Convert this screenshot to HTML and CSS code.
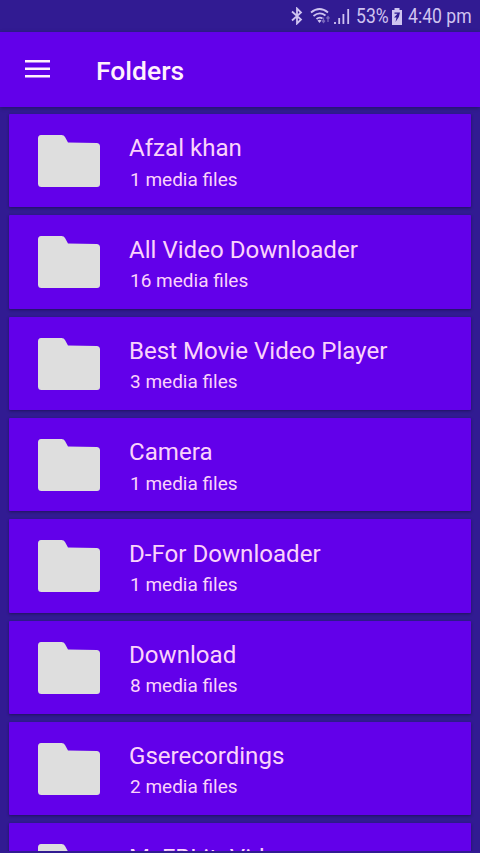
FILE: index.html
```html
<!DOCTYPE html>
<html lang="en">
<head>
<meta charset="utf-8">
<title>Folders</title>
<link rel="stylesheet" href="styles.css">
</head>
<body>
<svg class="defs" aria-hidden="true"><symbol id="folder" viewBox="0 0 62 52"><path d="M3 0H23.500Q26 0 27 2L30 7.500L58.500 8Q62 8 62 11.500V49Q62 52 59 52H3.500Q0 52 0 48.500V3.500Q0 0 3 0Z"/></symbol></svg>
<div class="status">
<svg class="bluetooth" viewBox="0 0 12 18"><path d="M1 4.500L10 12.500L6 16.500V1.500L10 5.500L1 13.500"/></svg>
<svg class="wifi" viewBox="0 0 22 18"><path d="M1 5.500Q9.500-1.500 18 5.500M3.500 9Q9.500 4 15.500 8.500M6.500 12Q9.500 9.500 12.500 11.500"/><path class="solid" d="M7.500 13.500Q9.500 12 11.500 13.500L9.500 16Z"/><path class="dim" d="M13.500 10.500V15M12 13.500L13.500 15.500L15 13.500M18 15V10M16.500 11.500L18 9.500L19.500 11.500"/></svg>
<svg class="signal" viewBox="0 0 16 16"><path d="M1 16V14M5.200 16V10M9.400 16V6M14.200 16V1"/></svg>
<span class="percent">53%</span>
<svg class="battery" viewBox="0 0 12 17"><path class="solid" d="M3.500 0H8.500V2H11V17H1V2H3.500Z"/><path class="bolt" d="M3.500 4.500H9L7.800 9L4.500 14L5.500 9.500H3L6.500 5.800H3.500Z"/></svg>
<span class="time">4:40 pm</span>
</div>
<header class="bar">
<svg class="menu" viewBox="0 0 26 20"><path d="M0 2.300H25M0 9.800H25M0 17.300H25"/></svg>
<h1>Folders</h1>
</header>
<main class="list">
<article class="card"><svg class="folder"><use href="#folder"/></svg><div class="info"><h2>Afzal khan</h2><p>1 media files</p></div></article>
<article class="card"><svg class="folder"><use href="#folder"/></svg><div class="info"><h2>All Video Downloader</h2><p>16 media files</p></div></article>
<article class="card"><svg class="folder"><use href="#folder"/></svg><div class="info"><h2>Best Movie Video Player</h2><p>3 media files</p></div></article>
<article class="card"><svg class="folder"><use href="#folder"/></svg><div class="info"><h2>Camera</h2><p>1 media files</p></div></article>
<article class="card"><svg class="folder"><use href="#folder"/></svg><div class="info"><h2>D-For Downloader</h2><p>1 media files</p></div></article>
<article class="card"><svg class="folder"><use href="#folder"/></svg><div class="info"><h2>Download</h2><p>8 media files</p></div></article>
<article class="card"><svg class="folder"><use href="#folder"/></svg><div class="info"><h2>Gserecordings</h2><p>2 media files</p></div></article>
<article class="card"><svg class="folder"><use href="#folder"/></svg><div class="info"><h2>MxFBLiteVideo</h2></div></article>
</main>
</body>
</html>
```
FILE: styles.css
```css
* { box-sizing: border-box; }
body {
  margin: 0;
  height: 853px;
  overflow: hidden;
  display: flex;
  flex-direction: column;
  background: #311b92;
  color: #fbd3fb;
  font-family: Roboto, sans-serif;
}
h1, h2, p { margin: 0; font-weight: 400; white-space: nowrap; }
.defs { display: none; }
.status {
  height: 32px;
  flex: none;
  display: flex;
  align-items: center;
  justify-content: flex-end;
  padding-right: 8px;
  color: #cfc4f0;
  font-size: 20px;
}
.status svg { flex: none; fill: none; stroke: currentColor; stroke-width: 1.8; }
.status .solid { fill: currentColor; stroke: none; }
.status .dim { opacity: .45; stroke-width: 1.3; }
.status .bolt { fill: #311b92; stroke: none; }
.bluetooth { width: 12px; height: 18px; margin-right: 7px; }
.wifi { width: 22px; height: 18px; margin-right: 2px; }
.signal { width: 16px; height: 16px; margin-right: 6px; }
.percent { width: 32px; margin-right: 3px; }
.battery { width: 12px; height: 17px; margin-right: 5px; }
.time { width: 64px; }
.percent, .time { display: block; white-space: nowrap; transform: scaleX(.88); transform-origin: left; }
.bar {
  height: 75px;
  flex: none;
  display: flex;
  align-items: center;
  padding: 2px 0 0 25px;
  background: #6200ea;
  box-shadow: 0 1px 4px rgba(0, 0, 0, .3);
  color: #fff0fc;
}
.menu { width: 26px; height: 20px; margin: 0 45px 4px 0; fill: none; stroke: currentColor; stroke-width: 2.4; }
.bar h1 { font-size: 26.500px; font-weight: 500; }
.list {
  height: 744px;
  flex: none;
  overflow: hidden;
  padding: 7.200px 9px 0;
  display: flex;
  flex-direction: column;
  gap: 8px;
}
.card {
  height: 93.300px;
  flex: none;
  display: flex;
  padding-left: 29px;
  background: #6200ea;
  border-radius: 1px;
  box-shadow: 0 1px 3px rgba(0, 0, 0, .35);
}
.folder { width: 62px; height: 52px; margin: 21px 29px 0 0; fill: #dedede; }
.info { padding-top: 19.300px; }
.info h2 { font-size: 24.100px; line-height: 30px; }
.info p { font-size: 19px; line-height: 24px; margin: 4.200px 0 0 1px; }
```
